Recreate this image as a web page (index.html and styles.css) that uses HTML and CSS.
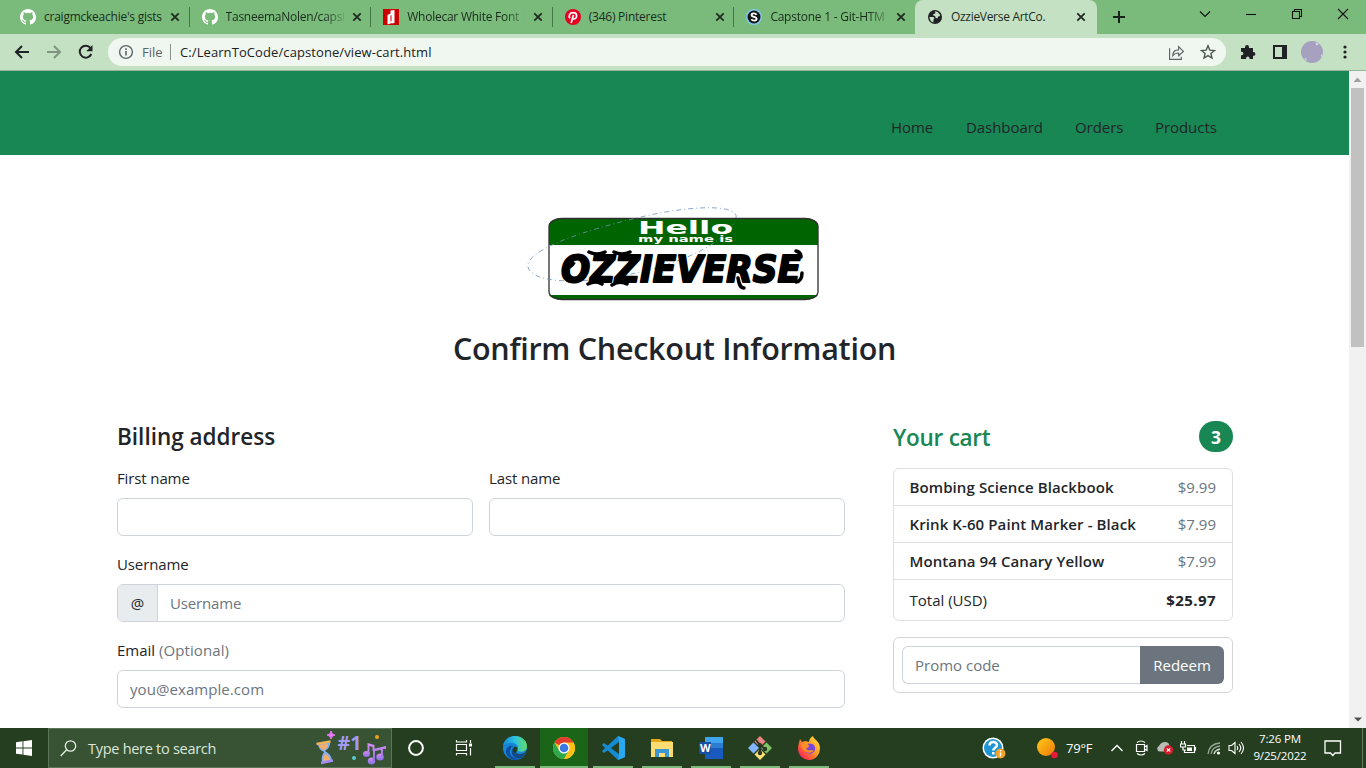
FILE: index.html
```
<!DOCTYPE html>
<html lang="en">
<head>
<meta charset="utf-8">
<title>OzzieVerse ArtCo.</title>
<link rel="stylesheet" href="styles.css">
</head>
<body>
<svg width="0" height="0" class="defs" aria-hidden="true">
  <symbol id="github" viewBox="0 0 16 16"><path fill="#fff" d="M8 0C3.58 0 0 3.58 0 8c0 3.54 2.29 6.53 5.47 7.59.4.07.55-.17.55-.38 0-.19-.01-.82-.01-1.49-2.01.37-2.53-.49-2.69-.94-.09-.23-.48-.94-.82-1.13-.28-.15-.68-.52-.01-.53.63-.01 1.08.58 1.23.82.72 1.21 1.87.87 2.33.66.07-.52.28-.87.51-1.07-1.78-.2-3.64-.89-3.64-3.95 0-.87.31-1.59.82-2.15-.08-.2-.36-1.02.08-2.12 0 0 .67-.21 2.2.82a7.6 7.6 0 0 1 4 0c1.53-1.04 2.2-.82 2.2-.82.44 1.1.16 1.92.08 2.12.51.56.82 1.27.82 2.15 0 3.07-1.87 3.75-3.65 3.95.29.25.54.73.54 1.48 0 1.07-.01 1.93-.01 2.2 0 .21.15.46.55.38A8 8 0 0 0 16 8c0-4.42-3.58-8-8-8z"/></symbol>
  <symbol id="close" viewBox="0 0 10 10"><path d="M1.3 1.3l7.4 7.4M8.7 1.3L1.3 8.7" stroke="#202a20" stroke-width="1.8"/></symbol>
</svg>

<header class="tabs">
  <div class="tab"><svg class="fav"><use href="#github"/></svg><span class="name">craigmckeachie's gists</span><svg class="x"><use href="#close"/></svg></div>
  <div class="tab"><svg class="fav"><use href="#github"/></svg><span class="name fade">TasneemaNolen/capst</span><svg class="x"><use href="#close"/></svg></div>
  <div class="tab"><svg class="fav" viewBox="0 0 16 16"><path fill="#c00" d="M0 0h16v16H0z"/><path fill="#fff" d="M4.500 6l3-1.500V1.500l4-.5v13l-3 .500-.3-1-1.200 1.500-2.500.3z"/><path fill="#c00" d="M7.500 6.500l1-.5v6l-1 .5z"/></svg><span class="name fade">Wholecar White Font |</span><svg class="x"><use href="#close"/></svg></div>
  <div class="tab"><svg class="fav" viewBox="0 0 16 16"><circle cx="8" cy="8" r="8" fill="#e60023"/><path d="M5 9.300C3.300 7 4.500 3.700 8.200 3.700c4.600 0 4.300 6.300.5 6.300-1.200 0-1.700-.9-1.700-.9M8.400 5.900L6.200 14" fill="none" stroke="#fff" stroke-width="1.700"/></svg><span class="name">(346) Pinterest</span><svg class="x"><use href="#close"/></svg></div>
  <div class="tab last"><svg class="fav" viewBox="0 0 16 16"><circle cx="8" cy="8" r="8" fill="#80c8f0"/><circle cx="8" cy="8" r="6.500" fill="#151515"/><path d="M10.600 5.700C9.400 3.800 5.400 4 5.600 6.300c.2 2 5.100 1.300 5 3.500-.1 2.300-4 2.300-5.200.5" fill="none" stroke="#fff" stroke-width="1.900"/></svg><span class="name fade">Capstone 1 - Git-HTM</span><svg class="x"><use href="#close"/></svg></div>
  <div class="tab active"><svg class="fav" viewBox="0 0 16 16"><circle cx="8" cy="8" r="7" fill="#202124"/><path fill="#c5e1c4" d="M2.500 8l4 0 1 1.800-1.200 1 .2 2.700C4 13 2.400 10.500 2.500 8zM8 2.300l2.700.7 2.500 3-.6 1.200-1.500.4-.7 1.800-1.900-.6-.4-1.800-2-.4.3-1.500 2-.6z"/></svg><span class="name wide">OzzieVerse ArtCo.</span><svg class="x"><use href="#close"/></svg></div>
  <svg class="plus" viewBox="0 0 12 12"><path d="M6 0v12M0 6h12" stroke="#17221a" stroke-width="2"/></svg>
  <div class="winctl">
    <svg viewBox="0 0 12 12"><path d="M1 3.500l5 5 5-5" /></svg>
    <svg viewBox="0 0 12 12"><path d="M1 6.500h10"/></svg>
    <svg viewBox="0 0 12 12"><path d="M1.500 3.500h7v7h-7zM3.500 3.500v-2h7v7h-2"/></svg>
    <svg viewBox="0 0 12 12"><path d="M1 1l10 10M11 1L1 11"/></svg>
  </div>
</header>

<div class="toolbar">
  <svg class="navi" viewBox="0 0 16 16"><path d="M15 8H2M8 2L2 8l6 6" fill="none" stroke="#202124" stroke-width="2"/></svg>
  <svg class="navi" viewBox="0 0 16 16"><path d="M1 8h13M8 2l6 6-6 6" fill="none" stroke="#7f9580" stroke-width="2"/></svg>
  <svg class="navi" viewBox="0 0 16 16"><path d="M13.300 10A6 6 0 1 1 12.500 4" fill="none" stroke="#202124" stroke-width="2"/><path d="M14.500 1v6.300H8.200z" fill="#202124"/></svg>
  <div class="omni">
    <svg class="info" viewBox="0 0 16 16"><circle cx="8" cy="8" r="6.400" fill="none" stroke="#5f6368" stroke-width="1.400"/><path d="M8 7v4.500M8 4.300v1.700" stroke="#5f6368" stroke-width="1.600"/></svg>
    <span class="file">File</span><i></i><span class="url">C:/LearnToCode/capstone/view-cart.html</span>
    <svg class="share" viewBox="0 0 16 16"><path d="M1.500 4v10.500h11V12M4.500 11c0-4 2.500-5.500 5.500-5.500V2.500L14.500 7 10 11V8.500c-2.500 0-4 .5-5.500 2.500z" fill="none" stroke="#5f6368" stroke-width="1.100"/></svg>
    <svg class="star" viewBox="0 0 16 16"><path d="M8 1.800l1.800 4.300 4.700.4-3.600 3 1.100 4.600L8 11.600l-4 2.500 1.100-4.600-3.600-3 4.700-.4z" fill="none" stroke="#4c5850" stroke-width="1.400"/></svg>
  </div>
  <svg class="ext" viewBox="0 0 16 16"><path fill="#202124" d="M1 4h4V3a2 2 0 0 1 4 0v1h4v4h.5a1.900 1.900 0 0 1 0 3.800H13V15H9.500v-.7a1.700 1.700 0 0 0-3.400 0v.7H1v-3.800h.7a1.700 1.700 0 0 0 0-3.400H1z"/></svg>
  <svg class="panel" viewBox="0 0 14 14"><path fill="#202124" d="M0 0h14v14H0z"/><path fill="#c5e1c4" d="M2 2h7v10H2z"/></svg>
  <svg class="avatar" viewBox="0 0 22 22"><circle cx="11" cy="11" r="11" fill="#a5a1be"/><path d="M14.500 2l2-.5 1 2-2 1zM3 18l2-1 .8 3zM20 14l1.500-1-1 4z" fill="#d8d6fa"/></svg>
  <svg class="dots" viewBox="0 0 4 14"><circle cx="2" cy="2" r="1.600"/><circle cx="2" cy="7" r="1.600"/><circle cx="2" cy="12" r="1.600"/></svg>
</div>

<div class="view">
  <div class="page">
    <nav class="sitenav"><a class="a1">Home</a><a class="a2">Dashboard</a><a class="a3">Orders</a><a class="a4">Products</a></nav>
    <svg class="logo" width="310" height="110" viewBox="520 200 310 110">
      <rect x="549" y="218.500" width="269" height="81" rx="13" ry="8" fill="#fff"/>
      <path d="M549 245v-18.500q0-8 13-8h243q13 0 13 8V245zM549 295h269q-3 4.700-13 4.700H562q-10 0-13-4.700z" fill="#006500"/>
      <rect x="549" y="218.500" width="269" height="81" rx="13" ry="8" fill="none" stroke="#303030" stroke-width="1.300"/>
      <path d="M736 218c3-13-39-14-95-1s-116 33-113 50c4 16 48 17 93 9s100-27 114-55" fill="none" stroke="#6f8fb8" stroke-width=".8" stroke-dasharray="5 3 1 3"/>
      <text class="hello" x="638" y="233.500" textLength="95" lengthAdjust="spacingAndGlyphs">Hello</text>
      <text class="myname" x="638" y="241.500" textLength="95" lengthAdjust="spacingAndGlyphs">my name is</text>
      <text class="ozzie" x="561" y="282" textLength="240" lengthAdjust="spacingAndGlyphs">OZZIEVERSE</text>
      <path d="M588 284q8-4 14 0M612 285q8-5 15-1M589 252q8 4 16 0M614 252q8 4 16 0M738 278c1 6 2 10 6 10M796 251q5 1 5 6M796 282q6-1 6-9" fill="none" stroke="#000" stroke-width="3.500" stroke-linecap="round"/>
      <path d="M566 266q4 3 8-4" fill="none" stroke="#000" stroke-width="4"/>
    </svg>
    <h1><span>Confirm Checkout Information</span></h1>
    <div class="cols">
      <form class="billing">
        <h2 class="bill">Billing address</h2>
        <div class="pair">
          <div><label class="tight">First name</label><div class="input"></div></div>
          <div><label class="tight">Last name</label><div class="input"></div></div>
        </div>
        <label class="tight">Username</label>
        <div class="input group"><b>@</b><span class="tight">Username</span></div>
        <label>Email <span>(Optional)</span></label>
        <div class="input"><span>you@example.com</span></div>
      </form>
      <aside>
        <div class="carthead"><h2 class="cart">Your cart</h2><span class="badge">3</span></div>
        <ul>
          <li><strong>Bombing Science Blackbook</strong><span>$9.99</span></li>
          <li><strong>Krink K-60 Paint Marker - Black</strong><span>$7.99</span></li>
          <li><strong>Montana 94 Canary Yellow</strong><span>$7.99</span></li>
          <li class="total"><em>Total (USD)</em><b>$25.97</b></li>
        </ul>
        <div class="promo"><div class="field"><span>Promo code</span></div><div class="redeem"><span>Redeem</span></div></div>
      </aside>
    </div>
  </div>
  <div class="scroll">
    <svg viewBox="0 0 17 17"><path d="M4.500 11h8L8.500 6.500z" fill="#a0a0a0"/></svg>
    <div class="thumb"></div>
    <svg class="down" viewBox="0 0 17 17"><path d="M5 6.500h8L9 10.500z" fill="#505050"/></svg>
  </div>
</div>

<footer class="taskbar">
  <div class="start"><svg width="16" height="16" viewBox="0 0 16 16"><path fill="#fff" d="M0 2.200l6.500-.9v6.200H0zM7.400 1.200L16 0v7.500H7.400zM0 8.400h6.500v6.200L0 13.700zM7.400 8.400H16V16l-8.600-1.200z"/></svg></div>
  <div class="search">
    <svg class="mag" viewBox="0 0 17 17"><circle cx="10.500" cy="6" r="5.200" fill="none" stroke="#e8ede7" stroke-width="1.300"/><path d="M6.700 9.800L.7 16" stroke="#e8ede7" stroke-width="1.300"/></svg>
    <span class="hint">Type here to search</span>
    <svg class="fun" width="74" height="38" viewBox="314 729 74 38">
      <defs><linearGradient id="pu" x2="0" y2="1"><stop stop-color="#d98df0"/><stop offset="1" stop-color="#8370e8"/></linearGradient></defs>
      <path d="M331 731q.5 4 4 4-3.500.5-4 4-.5-3.500-4-4 3.500 0 4-4z" fill="#e87af5" stroke="#e87af5"/>
      <path d="M318 744l12-2q1 5-5 9 6 3 7 9l-10 2q-1-6 2-10-6-3-6-8z" fill="#83aef5"/><path d="M319 745l9-1q0 4-4 6-4-1-5-5zM323 761q0-6 3-7 4 3 4 6z" fill="#f4ae68"/>
      <path d="M316.500 744l14-2.500" stroke="#efb45c" stroke-width="2.500"/><path d="M321 763l12-2.500" stroke="#a78bf0" stroke-width="2.500"/>
      <text x="337.500" y="750" class="one" textLength="24" lengthAdjust="spacingAndGlyphs">#1</text>
      <circle cx="377" cy="737" r="2" fill="#f0a313"/><circle cx="354" cy="758" r="2" fill="#58cbd0"/>
      <g fill="url(#pu)"><ellipse cx="366.500" cy="754" rx="3.500" ry="3"/><ellipse cx="371.500" cy="761" rx="3.700" ry="3.500"/><ellipse cx="380" cy="757" rx="3.700" ry="3.500"/><path d="M367.500 754v-11l7 2v6h-2v-4l-3-1v8zM373 761v-12l13-3v3h-3v8h-2v-7l-6 1v10z"/></g>
    </svg>
  </div>
  <div class="slot"><svg width="18" height="18" viewBox="0 0 18 18"><circle cx="9" cy="9" r="6.900" fill="none" stroke="#fff" stroke-width="2"/></svg></div>
  <div class="slot"><svg width="18" height="18" viewBox="0 0 18 18"><path d="M1.500 1v2h10V1M1.500 16.500v-2h10v2M1.500 5.500h10v6h-10zM15.500 1v3M15.500 9v7.500" fill="none" stroke="#fff" stroke-width="1.200"/><path d="M14 4.500h3v3h-3z" fill="#fff"/></svg></div>
  <div class="apps">
    <div class="app"><svg viewBox="0 0 24 24"><defs><linearGradient id="ed"><stop stop-color="#1687d6"/><stop offset=".5" stop-color="#2cc3df"/><stop offset="1" stop-color="#65dc63"/></linearGradient></defs><circle cx="12" cy="12" r="12" fill="#1684d8"/><path d="M0 10C1 3 7 0 12 0c7 0 12 5 12 10 0 5-5 7-9 5-2-1 0-2 0-4-1-5-10-6-15-1z" fill="url(#ed)"/><path d="M8 12c-4 7 4 12 10 10-5 4-14 1-15-6-.5-4 3-7 7-6-1 .5-2 1-2 2z" fill="#0f4fa0"/><path d="M10 12c0 6 6 8 12.500 5-1 3-4 5-5 5-7 2-11-5-7.500-10z" fill="#114a8b"/><path d="M14 15c-2 1-1 3 3 3s6-2 7-4v2l-2 1.500c-5 2-10 1-12-3 0-3 1-4 2-4 3 1 3 2.500 2 4.500z" fill="#243d1e"/></svg></div>
    <div class="app on"><svg viewBox="0 0 24 24"><g transform="translate(1 1) scale(.917)"><circle cx="12" cy="12" r="12" fill="#fbc116"/><path d="M12 12L1.600 6A12 12 0 0 1 22.400 6z" fill="#e33b2e"/><path d="M1.600 6A12 12 0 0 0 12 24l5.200-9L12 12 6.800 15z" fill="#2da94f"/><path d="M12 6h10.400A12 12 0 0 1 12 24l5.200-9z" fill="#fbc116"/><circle cx="12" cy="12" r="6" fill="#fff"/><circle cx="12" cy="12" r="4.700" fill="#3b78e7"/></g></svg></div>
    <div class="app"><svg viewBox="0 0 24 24"><path d="M17 0l7 3v18l-7 3L1 9l2-2 15 11V6L3 17l-2-2z" fill="#168bd2"/><path d="M17 0l7 3v18l-7 3 1-5V5z" fill="#2aa8ef"/></svg></div>
    <div class="app"><svg viewBox="0 0 24 24"><path d="M1 3h9l2 2h10v16H1z" fill="#e5a817"/><path d="M1 6h22v15H1z" fill="#ffdc72"/><path d="M5 13h14v8h-4v-4H9v4H5z" fill="#3b97d3"/></svg></div>
    <div class="app"><svg viewBox="0 0 24 24"><path d="M6 1h18v22H6z" fill="#185abd"/><path d="M6 1h18v6H6z" fill="#41a5ee"/><path d="M6 7h18v5H6z" fill="#2b7cd3"/><path d="M0 6h12v12H0z" fill="#174ea6"/><text x="1" y="15.500" class="word">W</text></svg></div>
    <div class="app"><svg viewBox="0 0 24 24"><path d="M12 0l5.500 5.500L12 11 6.500 5.500z" fill="#ee8585"/><path d="M5.500 6.500L11 12l-5.500 5.500L0 12z" fill="#82b4ff"/><path d="M18.500 6.500L24 12l-5.500 5.500L13 12z" fill="#80c466"/><path d="M12 13l5.500 5.500L12 24l-5.500-5.500z" fill="#ffe076"/><path d="M8 4l4 5v9M12 9l5 4" stroke="#283625" stroke-width="2" fill="none"/><circle cx="12" cy="9" r="2" fill="#283625"/><circle cx="12" cy="17" r="2.200" fill="#283625"/><circle cx="17" cy="13" r="2.200" fill="#283625"/></svg></div>
    <div class="app"><svg viewBox="0 0 24 24"><defs><linearGradient id="ff" x1="1" x2="0" y2="1"><stop stop-color="#ffe93a"/><stop offset=".45" stop-color="#ff9a28"/><stop offset=".8" stop-color="#ff364b"/><stop offset="1" stop-color="#e3169a"/></linearGradient></defs><path d="M3 3l2 3 3-1 4 1c0-3 2-5 4-6 0 3 7 5 7 12A11 11.500 0 0 1 1 13C1 9 2 7 3 3z" fill="url(#ff)"/><path d="M10 8c6-2 9 2 8 6-2 6-11 4-10-1l4-2z" fill="#7745dc"/><path d="M4 7l3 1 4 0 1 2-3 2c1 4 6 1 8 3-5 4-13 1-13-8z" fill="#ff8d27"/></svg></div>
  </div>
  <div class="tray">
    <svg class="t-help" viewBox="0 0 24 22"><circle cx="11" cy="11" r="10.500" fill="#fff"/><circle cx="11" cy="11" r="9" fill="#1d96d3"/><path d="M7.500 8.500c0-5 7.500-4.500 7.500-.5 0 3-3.700 2.500-3.700 5.500M11.300 15v2.500" fill="none" stroke="#fff" stroke-width="2.500"/><circle cx="18.500" cy="16.500" r="5" fill="#f0a52a"/><path d="M18.500 15.500v4M18.500 13v1.500" stroke="#fff" stroke-width="1.400"/></svg>
    <svg class="t-sun" viewBox="0 0 22 22"><defs><linearGradient id="su" x2="1" y2="1"><stop stop-color="#ffca18"/><stop offset="1" stop-color="#ee7909"/></linearGradient></defs><circle cx="10" cy="10" r="9" fill="url(#su)"/><circle cx="18.500" cy="18" r="3.300" fill="#e81a3c"/></svg>
    <span class="temp">79°F</span>
    <svg class="t-up" viewBox="0 0 12 8"><path d="M.5 7L6 1.500 11.500 7" fill="none" stroke="#fff" stroke-width="1.300"/></svg>
    <svg class="t-cam" viewBox="0 0 16 16"><path d="M2.500 4.500h8v7h-8zM10.500 7l2.500-1.500v5L10.500 9M3 2.500Q7 -.5 11 2.500M3 13.500q4 3 8 0" fill="none" stroke="#fff" stroke-width="1.200"/></svg>
    <svg class="t-cloud" viewBox="0 0 18 14"><path d="M3 10.500a3 3 0 0 1 0-5.500C5 1 10-.5 13 3l1 7.500z" fill="#b9bcb7"/><circle cx="12.500" cy="9" r="4.700" fill="#d31f2c"/><path d="M10.800 7.300l3.400 3.400M14.200 7.300l-3.400 3.400" stroke="#fff" stroke-width="1.200"/></svg>
    <svg class="t-bat" viewBox="0 0 17 14"><path d="M4.500 9.500v2h10v-7H7M15.500 6v3.500M1.500 0v3M4.500 0v3M.5 3h5v3h-5zM3 6v3h3" fill="none" stroke="#fff" stroke-width="1.200"/><path d="M7 6.500h5v3.500H7z" fill="#fff"/></svg>
    <svg class="t-wifi" viewBox="0 0 14 14"><path d="M1 13Q2 3 13 2M4 13q1-7 9-8" fill="none" stroke="#9aa898" stroke-width="1.300"/><path d="M7 13q1-4 6-5" fill="none" stroke="#d5dbd4" stroke-width="1.300"/><circle cx="11.500" cy="12" r="1.600" fill="#fff"/></svg>
    <svg class="t-vol" viewBox="0 0 17 14"><path d="M1 4.500h2.500L7 1.500v11L3.500 9.500H1zM9 5q1.500 2 0 4M11 3q3.500 4 0 8M13 1q5 6 0 12" fill="none" stroke="#fff" stroke-width="1.100"/></svg>
    <div class="clock"><span class="time">7:26 PM</span><span class="date">9/25/2022</span></div>
    <svg class="t-note" viewBox="0 0 18 17"><path d="M1 1h15.500v12H11l-2.200 2.500L6.500 13H1z" fill="none" stroke="#fff" stroke-width="1.300"/></svg>
    <i class="peek"></i>
  </div>
</footer>
</body>
</html>
```
FILE: styles.css
```
*{box-sizing:border-box}
body{margin:0;width:1366px;height:768px;overflow:hidden;display:flex;flex-direction:column;font-family:"Open Sans","Noto Sans",sans-serif;font-size:15px;color:#212529;background:#fff}
svg{display:block;flex:none}
.defs{position:absolute}
span,a,strong,b,em{white-space:nowrap}

.tabs{height:34px;background:#7abb7b;display:flex;align-items:center;padding-left:8px;flex:none}
.tab{width:181.6px;height:34px;display:flex;align-items:center;padding-left:12px;flex:none;background:linear-gradient(#48774a,#48774a) right center/1px 20px no-repeat}
.tab.last{background:none;width:180.600px}
.tab.active{background:#c5e1c4;border-radius:8px 8px 0 0;width:182px}
.fav{width:16px;height:16px;margin-right:8px}
.name{width:118px;font-size:12px;letter-spacing:-.24px;line-height:20px;color:#1b2b1c}
.name.wide{letter-spacing:-.3px;width:117px}
.fade{-webkit-mask-image:linear-gradient(90deg,#000 82%,rgba(0,0,0,.2))}
.x{width:10px;height:10px;margin-left:8px}
.plus{width:12px;height:12px;margin-left:16px}
.winctl{display:flex;margin-left:74px;gap:34px;margin-top:-6px}
.winctl svg{width:12px;height:12px;fill:none;stroke:#111;stroke-width:1.1}

.toolbar{height:37px;background:#c5e1c4;border-bottom:1px solid #98b49a;display:flex;align-items:center;padding-left:14px;flex:none}
.navi{width:16px;height:16px;margin-right:16px}
.omni{width:1118px;height:28px;border-radius:14px;background:#f0f7f0;margin-left:-2px;display:flex;align-items:center;padding-left:10px;font-size:13px}
.info{width:16px;height:16px;margin-right:8px}
.file{width:22px;color:#5f6368}
.omni i{width:1px;height:16px;background:#8b918c;margin:0 9px 0 6px}
.url{width:988px;color:#202124;letter-spacing:.09px}
.share{width:17px;height:17px;margin-right:15px}
.star{width:16px;height:16px}
.ext{width:16px;height:16px;margin-left:14px}
.panel{width:14px;height:14px;margin-left:17px}
.avatar{width:22px;height:22px;margin-left:14px}
.dots{width:4px;height:14px;margin-left:20px;fill:#202124}

.view{height:657px;display:flex;flex:none}
.page{width:1349px;height:657px;overflow:hidden}
.scroll{width:17px;background:#f1f1f1;display:flex;flex-direction:column}
.scroll svg{width:17px;height:17px}
.thumb{width:13px;height:259px;margin-left:2px;background:#c1c1c1}
.scroll .down{margin-top:auto}
.sitenav{height:84px;background:#198754;display:flex;justify-content:flex-end;padding:44px 132px 0 0;line-height:24px;letter-spacing:-.06px}
.sitenav a{box-sizing:content-box;margin-left:32px}
.a1{width:43px}.a2{width:77px}.a3{width:48px}.a4{width:62px}
.logo{margin:45px 0 0 520px}
.hello{font:700 17px "DejaVu Sans","Open Sans",sans-serif;fill:#fff}
.myname{font:700 8px "DejaVu Sans","Open Sans",sans-serif;fill:#fff}
.ozzie{font:italic 700 38px "DejaVu Sans","Open Sans",sans-serif;fill:#000;stroke:#000;stroke-width:2;stroke-linejoin:round}
h1{margin:19px 0 0;text-align:center;font-size:30.500px;line-height:38px;font-weight:600;letter-spacing:-.27px}
h2{margin:0;font-size:22.5px;line-height:29px;font-weight:600}
.cols{display:flex;padding:54px 0 0 117px;gap:48px}
.billing{width:728px}
.bill{margin:1px 0 15px}
.pair{display:grid;grid-template-columns:1fr 1fr;gap:16px}
label{display:block;line-height:24px;margin-bottom:8px;white-space:nowrap}
.tight{letter-spacing:-.12px}
label span{color:#6c757d;letter-spacing:.08px}
.input{height:38px;border:1px solid #ced4da;border-radius:6px;margin-bottom:16px;padding-left:12px;display:flex;align-items:center;color:#6c757d;letter-spacing:.07px;overflow:hidden}
.input .tight{letter-spacing:-.15px}
.group{padding-left:0}
.group b{width:40px;height:36px;line-height:36px;text-align:center;background:#e9ecef;border-right:1px solid #ced4da;color:#212529;font-weight:400;margin-right:12px}
aside{width:340px}
.carthead{display:flex;justify-content:space-between;align-items:center;height:31px;margin-bottom:16px}
.cart{color:#198754;margin-top:2px;letter-spacing:-.25px}
.badge{width:34px;height:31px;border-radius:16px;background:#198754;color:#fff;text-align:center;font-weight:700;font-size:17.5px;line-height:32px}
ul{list-style:none;margin:0 0 16px;padding:0;border:1px solid #dfdfdf;border-radius:6px}
li{height:37px;padding:0 16px 0 15.500px;display:flex;align-items:center;justify-content:space-between;border-bottom:1px solid #dfdfdf}
li strong{font-weight:600;letter-spacing:.1px}
li span{color:#6c757d}
li em{font-style:normal}
li b{letter-spacing:.45px}
li.total{height:40px;border:0}
.promo{height:56px;border:1px solid #d3d4d5;border-radius:6px;padding:8px;display:flex}
.field{width:238px;border:1px solid #ced4da;border-right:0;border-radius:6px 0 0 6px;padding-left:12px;line-height:36px;color:#6c757d}
.redeem{width:84px;background:#6c757d;border-radius:0 6px 6px 0;color:#fff;text-align:center;line-height:38px}

.taskbar{height:40px;background:#243e1f;display:flex;flex:none;color:#fff}
.start{width:48px;display:flex;align-items:center;justify-content:center}
.search{width:344px;border:1px solid #5c755a;background:#375334;display:flex;align-items:center;padding-left:11px}
.mag{width:17px;height:17px}
.hint{margin-left:11px;width:226px;color:#dde5dc;font-size:14.5px;letter-spacing:-.28px}
.one{font:700 20px "Open Sans",sans-serif;fill:#a39af2}
.slot{width:48px;display:flex;align-items:center;justify-content:center}
.apps{display:flex;margin-left:2.500px}
.app{width:49px;display:flex;align-items:center;justify-content:center;background:linear-gradient(#7abb7b,#7abb7b) center bottom/40px 2px no-repeat}
.app.on{background:linear-gradient(#7abb7b,#7abb7b) center bottom/48px 2px no-repeat,linear-gradient(#1b6518,#1b6518) center/48px 40px no-repeat}
.app svg{width:24px;height:24px}
.word{font:700 11px "Open Sans",sans-serif;fill:#fff}
.tray{display:flex;align-items:center;margin-left:148px}
.t-help{width:24px;height:22px}
.t-sun{width:22px;height:22px;margin-left:30.500px}
.temp{width:28px;margin-left:8px;font-size:13px;letter-spacing:-.2px}
.t-up{width:12px;height:8px;margin-left:17px}
.t-cam{width:16px;height:16px;margin-left:11px}
.t-cloud{width:18px;height:14px;margin-left:6px}
.t-bat{width:17px;height:14px;margin-left:6px}
.t-wifi{width:14px;height:14px;margin-left:10px}
.t-vol{width:17px;height:14px;margin-left:7px}
.clock{width:70px;display:flex;flex-direction:column;align-items:center;font-size:11.500px;line-height:17px;letter-spacing:-.15px;margin-left:0;margin-top:-2px}
.t-note{width:18px;height:17px;margin-left:9px}
.peek{width:1px;height:40px;background:#68805f;margin-left:20px}
```
